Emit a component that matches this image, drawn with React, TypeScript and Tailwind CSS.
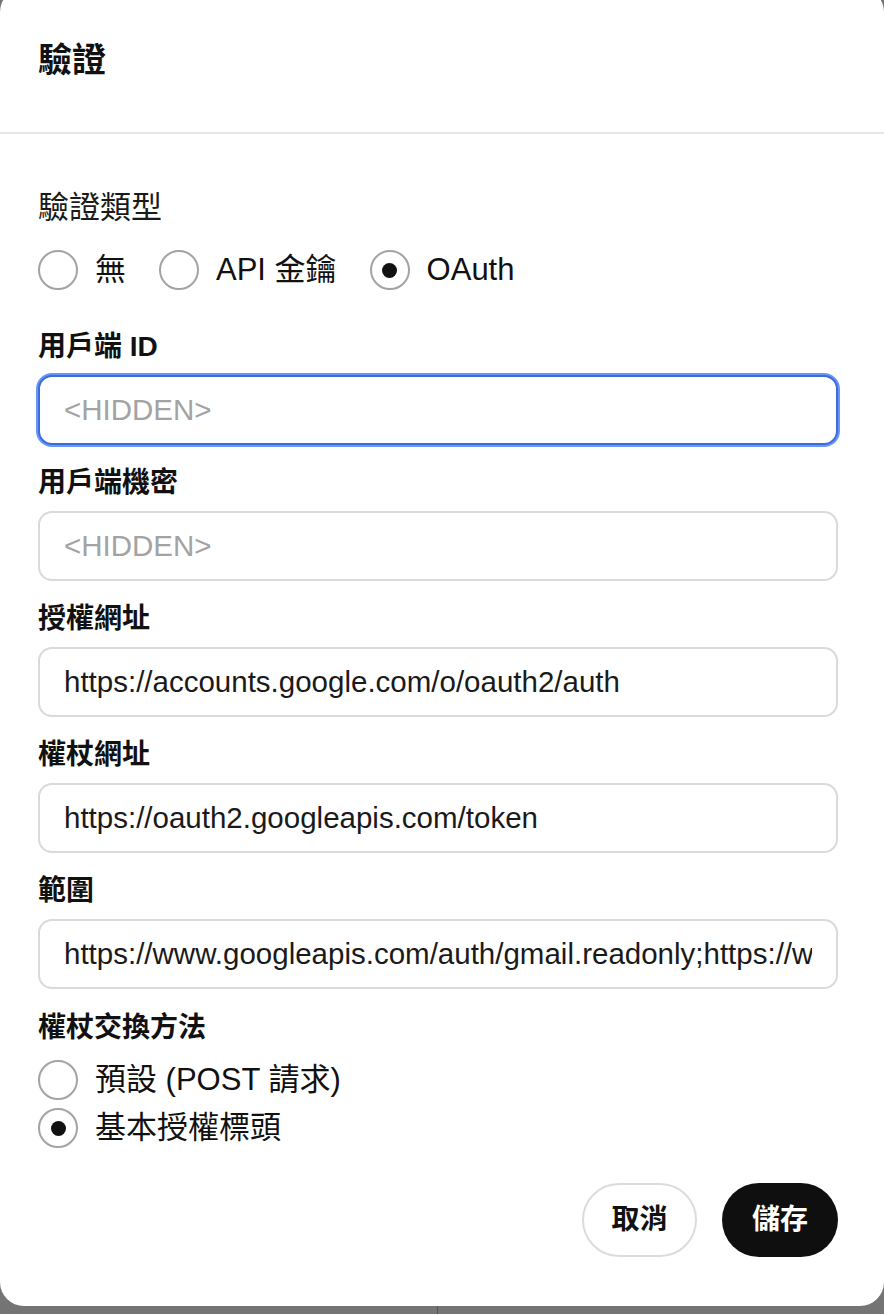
import React from "react"

const FONT = "font-['Liberation_Sans','Noto_Sans_CJK_TC',sans-serif]"

function Radio({ checked }: { checked?: boolean }) {
  return (
    <span className="w-[40px] h-[40px] rounded-full border-2 border-[#a3a3a3] flex items-center justify-center shrink-0 bg-white">
      {checked && <span className="w-[15px] h-[15px] rounded-full bg-[#111]" />}
    </span>
  )
}

function Field({ label, value, placeholder, focused }: { label: string; value?: string; placeholder?: string; focused?: boolean }) {
  return (
    <div className="flex flex-col">
      <label className="text-[28px] leading-[32px] font-bold text-[#111]">{label}</label>
      <input
        readOnly
        value={value ?? ""}
        placeholder={placeholder}
        className={
          focused
            ? "mt-[12px] h-[70px] w-full rounded-[14px] border-2 border-[#3a6ce0] shadow-[0_0_0_2px_#6a97f2] px-[24px] text-[29.5px] text-[#1a1a1a] placeholder:text-[#a3a3a3] outline-none bg-white"
            : "mt-[12px] h-[70px] w-full rounded-[14px] border-2 border-[#dadada] px-[24px] text-[29.5px] text-[#1a1a1a] placeholder:text-[#a3a3a3] outline-none bg-white"
        }
      />
    </div>
  )
}

export default function App() {
  return (
    <div className={`w-[884px] h-[1314px] bg-[#747474] overflow-hidden flex flex-col ${FONT}`}>
      <div className="mt-[-12px] bg-white rounded-[24px] flex flex-col">
        <div className="h-[146px] border-b-2 border-[#e6e6e6] flex items-center pl-[38px]">
          <h1 className="text-[34px] font-bold text-[#111] leading-[40px]">驗證</h1>
        </div>

        <div className="pl-[38px] pr-[46px] pt-[54px] pb-[49px] flex flex-col">
          <div className="text-[31px] leading-[40px] text-[#1a1a1a]">驗證類型</div>
          <div className="mt-[22px] flex items-center gap-[33px]">
            <div className="flex items-center gap-[17px]">
              <Radio />
              <span className="text-[31px] leading-[40px] text-[#111]">無</span>
            </div>
            <div className="flex items-center gap-[17px]">
              <Radio />
              <span className="text-[31px] leading-[40px] text-[#111]">API 金鑰</span>
            </div>
            <div className="flex items-center gap-[17px]">
              <Radio checked />
              <span className="text-[31px] leading-[40px] text-[#111]">OAuth</span>
            </div>
          </div>

          <div className="mt-[41px] flex flex-col gap-[22px]">
            <Field label="用戶端 ID" placeholder="<HIDDEN>" focused />
            <Field label="用戶端機密" placeholder="<HIDDEN>" />
            <Field label="授權網址" value="https://accounts.google.com/o/oauth2/auth" />
            <Field label="權杖網址" value="https://oauth2.googleapis.com/token" />
            <Field label="範圍" value="https://www.googleapis.com/auth/gmail.readonly;https://www.googleapis.com/auth/gmail.send" />
          </div>

          <div className="mt-[23px] text-[28px] leading-[32px] font-bold text-[#111]">權杖交換方法</div>
          <div className="mt-[16px] flex flex-col gap-[8px]">
            <div className="flex items-center gap-[17px]">
              <Radio />
              <span className="text-[31px] leading-[40px] text-[#111]">預設 (POST 請求)</span>
            </div>
            <div className="flex items-center gap-[17px]">
              <Radio checked />
              <span className="text-[31px] leading-[40px] text-[#111]">基本授權標頭</span>
            </div>
          </div>

          <div className="mt-[35px] flex justify-end gap-[25px]">
            <button className="h-[74px] w-[115px] rounded-full border-2 border-[#dcdcdc] bg-white text-[28px] font-bold text-[#111]">
              取消
            </button>
            <button className="h-[74px] w-[116px] rounded-full bg-[#0f0f0f] text-[28px] font-bold text-white">
              儲存
            </button>
          </div>
        </div>
      </div>
      <div className="flex-1 flex">
        <div className="w-[438px] border-r border-[#555]" />
      </div>
    </div>
  )
}
